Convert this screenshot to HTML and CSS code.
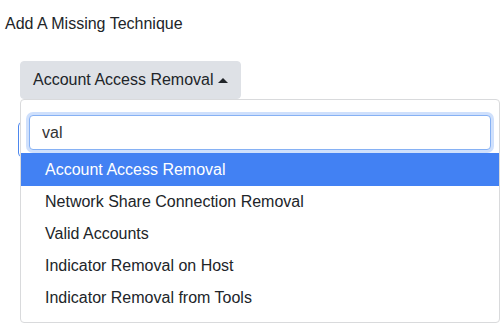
FILE: index.html
```html
<!DOCTYPE html>
<html lang="en">
<head>
    <meta charset="UTF-8">
    <title>Add A Missing Technique</title>
    <link rel="stylesheet" href="styles.css">
</head>
<body>
<div class="page">
    <div class="title">Add A Missing Technique</div>
    <div class="picker">
        <button class="toggle" type="button">Account Access Removal<span class="caret"></span></button>
        <div class="under"></div>
        <div class="menu">
            <div class="search">
                <input type="text" value="val">
            </div>
            <div class="item active">Account Access Removal</div>
            <div class="item">Network Share Connection Removal</div>
            <div class="item">Valid Accounts</div>
            <div class="item">Indicator Removal on Host</div>
            <div class="item">Indicator Removal from Tools</div>
        </div>
    </div>
</div>
</body>
</html>
```

FILE: styles.css
```css
html, body { min-height: 100%; }
body { margin: 0; font-family: "Liberation Sans", Arial, sans-serif; font-size: 16px; color: #212529; background: #fff; }
.page { padding: 12px 5px 7px; }
.title { line-height: 24px; }
.picker { position: relative; margin: 25px 0 0 15px; }
.toggle { display: inline-flex; align-items: center; height: 38px; padding: 0 12px; background: #dee1e6; border: 1px solid #dee1e6; border-radius: 4px; font: inherit; color: #212529; }
.caret { width: 0; height: 0; margin-left: 4px; border-left: 5px solid transparent; border-right: 5px solid transparent; border-bottom: 5px solid #212529; }
.under { position: absolute; top: 61px; left: -2px; width: 200px; height: 33px; border: 1px solid #4d87ee; border-radius: 4px; }
.menu { position: relative; width: 478px; padding: 8px 0; background: #fff; border: 1px solid #d9dadc; border-radius: 4px; }
.search { padding: 7px 8px 3px; }
.search input { display: block; box-sizing: border-box; width: 100%; height: 35px; padding: 0 12px; border: 1px solid #86b1f4; border-radius: 4px; box-shadow: 0 0 0 3px #cfe0fc; font: inherit; color: #333; outline: none; }
.item { padding: 4px 24px; line-height: 24px; }
.item.active { background: #4281f3; color: #fff; padding: 5px 24px 4px; }
```
